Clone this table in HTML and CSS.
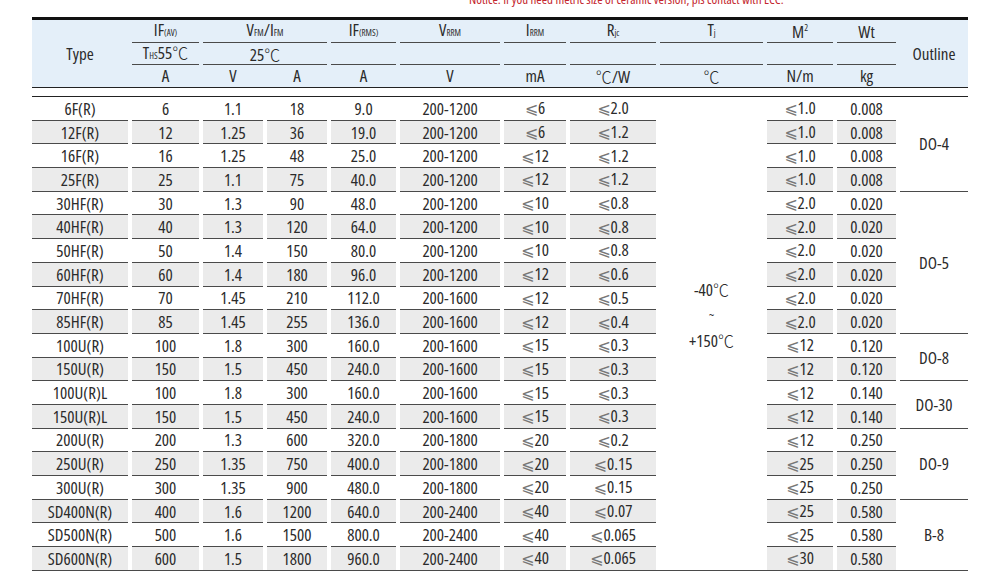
FILE: index.html
```html
<!DOCTYPE html>
<html>
<head>
<meta charset="utf-8">
<link rel="stylesheet" href="styles.css">
</head>
<body>
<div class="page">
<p class="notice">Notice: If you need metric size of ceramic version, pls contact with ECC.</p>
<table class="spec">
<colgroup>
<col class="c-type"><col class="c-if"><col class="c-v"><col class="c-a"><col class="c-ifr"><col class="c-vrrm"><col class="c-irrm"><col class="c-rjc"><col class="c-tj"><col class="c-m2"><col class="c-wt"><col class="c-ol">
</colgroup>
<thead>
<tr class="r1"><th rowspan="3" class="type">Type</th><th>IF<span class="sub">(AV)</span></th><th colspan="2">V<span class="sub">FM</span>/I<span class="sub">FM</span></th><th>IF<span class="sub">(RMS)</span></th><th>V<span class="sub">RRM</span></th><th>I<span class="sub">RRM</span></th><th>R<span class="sub">jc</span></th><th>T<span class="sub">j</span></th><th>M<sup class="sup">2</sup></th><th>Wt</th><th rowspan="3" class="outline">Outline</th></tr>
<tr class="r2"><th>T<span class="sub">HS</span>55<span class="deg">℃</span></th><th colspan="2">25<span class="deg">℃</span></th><th></th><th></th><th></th><th></th><th></th><th></th><th></th></tr>
<tr class="r3"><th>A</th><th>V</th><th>A</th><th>A</th><th>V</th><th>mA</th><th><span class="deg">℃</span>/W</th><th><span class="deg">℃</span></th><th>N/m</th><th>kg</th></tr>
<tr class="spacer"><td colspan="12"></td></tr>
</thead>
<tbody>
<tr><td>6F(R)</td><td>6</td><td>1.1</td><td>18</td><td>9.0</td><td>200-1200</td><td><span class="le">⩽</span>6</td><td><span class="le">⩽</span>2.0</td><td rowspan="20" class="tj">-40<span class="deg">℃</span><br><span class="tilde">~</span><br>+150<span class="deg">℃</span></td><td><span class="le">⩽</span>1.0</td><td>0.008</td><td rowspan="4" class="ol">DO-4</td></tr>
<tr><td>12F(R)</td><td>12</td><td>1.25</td><td>36</td><td>19.0</td><td>200-1200</td><td><span class="le">⩽</span>6</td><td><span class="le">⩽</span>1.2</td><td><span class="le">⩽</span>1.0</td><td>0.008</td></tr>
<tr><td>16F(R)</td><td>16</td><td>1.25</td><td>48</td><td>25.0</td><td>200-1200</td><td><span class="le">⩽</span>12</td><td><span class="le">⩽</span>1.2</td><td><span class="le">⩽</span>1.0</td><td>0.008</td></tr>
<tr><td>25F(R)</td><td>25</td><td>1.1</td><td>75</td><td>40.0</td><td>200-1200</td><td><span class="le">⩽</span>12</td><td><span class="le">⩽</span>1.2</td><td><span class="le">⩽</span>1.0</td><td>0.008</td></tr>
<tr><td>30HF(R)</td><td>30</td><td>1.3</td><td>90</td><td>48.0</td><td>200-1200</td><td><span class="le">⩽</span>10</td><td><span class="le">⩽</span>0.8</td><td><span class="le">⩽</span>2.0</td><td>0.020</td><td rowspan="6" class="ol">DO-5</td></tr>
<tr><td>40HF(R)</td><td>40</td><td>1.3</td><td>120</td><td>64.0</td><td>200-1200</td><td><span class="le">⩽</span>10</td><td><span class="le">⩽</span>0.8</td><td><span class="le">⩽</span>2.0</td><td>0.020</td></tr>
<tr><td>50HF(R)</td><td>50</td><td>1.4</td><td>150</td><td>80.0</td><td>200-1200</td><td><span class="le">⩽</span>10</td><td><span class="le">⩽</span>0.8</td><td><span class="le">⩽</span>2.0</td><td>0.020</td></tr>
<tr><td>60HF(R)</td><td>60</td><td>1.4</td><td>180</td><td>96.0</td><td>200-1200</td><td><span class="le">⩽</span>12</td><td><span class="le">⩽</span>0.6</td><td><span class="le">⩽</span>2.0</td><td>0.020</td></tr>
<tr><td>70HF(R)</td><td>70</td><td>1.45</td><td>210</td><td>112.0</td><td>200-1600</td><td><span class="le">⩽</span>12</td><td><span class="le">⩽</span>0.5</td><td><span class="le">⩽</span>2.0</td><td>0.020</td></tr>
<tr><td>85HF(R)</td><td>85</td><td>1.45</td><td>255</td><td>136.0</td><td>200-1600</td><td><span class="le">⩽</span>12</td><td><span class="le">⩽</span>0.4</td><td><span class="le">⩽</span>2.0</td><td>0.020</td></tr>
<tr><td>100U(R)</td><td>100</td><td>1.8</td><td>300</td><td>160.0</td><td>200-1600</td><td><span class="le">⩽</span>15</td><td><span class="le">⩽</span>0.3</td><td><span class="le">⩽</span>12</td><td>0.120</td><td rowspan="2" class="ol">DO-8</td></tr>
<tr><td>150U(R)</td><td>150</td><td>1.5</td><td>450</td><td>240.0</td><td>200-1600</td><td><span class="le">⩽</span>15</td><td><span class="le">⩽</span>0.3</td><td><span class="le">⩽</span>12</td><td>0.120</td></tr>
<tr><td>100U(R)L</td><td>100</td><td>1.8</td><td>300</td><td>160.0</td><td>200-1600</td><td><span class="le">⩽</span>15</td><td><span class="le">⩽</span>0.3</td><td><span class="le">⩽</span>12</td><td>0.140</td><td rowspan="2" class="ol">DO-30</td></tr>
<tr><td>150U(R)L</td><td>150</td><td>1.5</td><td>450</td><td>240.0</td><td>200-1600</td><td><span class="le">⩽</span>15</td><td><span class="le">⩽</span>0.3</td><td><span class="le">⩽</span>12</td><td>0.140</td></tr>
<tr><td>200U(R)</td><td>200</td><td>1.3</td><td>600</td><td>320.0</td><td>200-1800</td><td><span class="le">⩽</span>20</td><td><span class="le">⩽</span>0.2</td><td><span class="le">⩽</span>12</td><td>0.250</td><td rowspan="3" class="ol">DO-9</td></tr>
<tr><td>250U(R)</td><td>250</td><td>1.35</td><td>750</td><td>400.0</td><td>200-1800</td><td><span class="le">⩽</span>20</td><td><span class="le">⩽</span>0.15</td><td><span class="le">⩽</span>25</td><td>0.250</td></tr>
<tr><td>300U(R)</td><td>300</td><td>1.35</td><td>900</td><td>480.0</td><td>200-1800</td><td><span class="le">⩽</span>20</td><td><span class="le">⩽</span>0.15</td><td><span class="le">⩽</span>25</td><td>0.250</td></tr>
<tr><td>SD400N(R)</td><td>400</td><td>1.6</td><td>1200</td><td>640.0</td><td>200-2400</td><td><span class="le">⩽</span>40</td><td><span class="le">⩽</span>0.07</td><td><span class="le">⩽</span>25</td><td>0.580</td><td rowspan="3" class="ol end">B-8</td></tr>
<tr><td>SD500N(R)</td><td>500</td><td>1.6</td><td>1500</td><td>800.0</td><td>200-2400</td><td><span class="le">⩽</span>40</td><td><span class="le">⩽</span>0.065</td><td><span class="le">⩽</span>25</td><td>0.580</td></tr>
<tr class="last"><td>SD600N(R)</td><td>600</td><td>1.5</td><td>1800</td><td>960.0</td><td>200-2400</td><td><span class="le">⩽</span>40</td><td><span class="le">⩽</span>0.065</td><td><span class="le">⩽</span>30</td><td>0.580</td></tr>
</tbody>
</table>
</div>
</body>
</html>
```
FILE: styles.css
```css
* { box-sizing: border-box; }
body {
  margin: 0;
  background: #fff;
  color: #2b2b2b;
  font-family: "Open Sans", "DejaVu Sans Condensed", "Noto Sans CJK SC", sans-serif;
  font-stretch: 80%;
}
.page { padding-left: 32px; }
.notice {
  margin: -7px 0 0 437px;
  height: 24px;
  font-size: 13px;
  line-height: 13px;
  font-stretch: 75%;
  color: #c4262e;
}
.spec {
  width: 936px;
  table-layout: fixed;
  border-collapse: separate;
  border-spacing: 0;
  border-top: 3px solid #111;
  font-size: 17px;
}
.c-type { width: 96px; }
.c-if { width: 71px; }
.c-v { width: 64px; }
.c-a { width: 64px; }
.c-ifr { width: 69px; }
.c-vrrm { width: 104px; }
.c-irrm { width: 66px; }
.c-rjc { width: 90px; }
.c-tj { width: 107px; }
.c-m2 { width: 70px; }
.c-wt { width: 63px; }
.c-ol { width: 72px; }

.spec th, .spec td {
  padding: 0 0 0 4px;
  text-align: center;
  vertical-align: middle;
  font-weight: normal;
  white-space: nowrap;
  background-repeat: no-repeat;
  line-height: 18px;
}
.spec thead { background: #e4eff9; }
.spec .r1 { height: 23px; }
.spec .r2 { height: 22px; }
.spec .r3 { height: 23px; }
.spec .r1 th, .spec .r2 th {
  background-image: linear-gradient(#4a4a4a, #4a4a4a);
  background-size: calc(100% - 4px) 1px;
  background-position: right bottom;
}
.spec .r1 th.type, .spec .r1 th.outline {
  background-image: none;
  border-bottom: 1px solid #222;
}
.spec th.type { padding-left: 0; }
.spec .r3 th { border-bottom: 1px solid #222; }
.spec .spacer td {
  height: 9px;
  padding: 0;
  background: #fff;
  border-bottom: 1px solid #222;
}
.sub { font-size: 9px; }
.sup { font-size: 9px; vertical-align: 7px; line-height: 0; }
.deg {
  font-family: "Noto Sans CJK SC", sans-serif;
  font-size: 16px;
  font-weight: 300;
}

.spec tbody tr { height: 23.7px; }
.spec tbody td {
  background-image: linear-gradient(#4a4a4a, #4a4a4a);
  background-size: calc(100% - 4px) 1px;
  background-position: right bottom;
}
.spec tbody tr:nth-child(even) td {
  background-image: linear-gradient(#4a4a4a, #4a4a4a), linear-gradient(#ebebeb, #ebebeb);
  background-size: calc(100% - 4px) 1px, calc(100% - 4px) 100%;
  background-position: right bottom, right top;
}
.spec tbody tr td:first-child { padding-left: 0; }
.spec tbody tr td:first-child { background-size: 100% 1px; }
.spec tbody tr:nth-child(even) td:first-child { background-size: 100% 1px, 100% 100%; }
.spec tbody tr.last td { background-size: 100% 1px, calc(100% - 4px) 100%; }
.spec tbody tr.last td:first-child { background-size: 100% 1px, 100% 100%; }
.spec tbody tr td.tj {
  background-image: linear-gradient(#4a4a4a, #4a4a4a);
  background-size: 100% 1px;
  background-position: left bottom;
  line-height: 24px;
  padding-bottom: 38px;
}
.spec tbody tr td.ol {
  background-image: linear-gradient(#4a4a4a, #4a4a4a);
  background-size: calc(100% - 4px) 1px;
  background-position: right bottom;
}
.spec tbody tr td.ol.end { background-size: 100% 1px; }
.le {
  font-family: "DejaVu Sans", sans-serif;
  font-size: 16px;
  color: #777;
  font-stretch: 100%;
}
.tilde { font-size: 12px; }
```
